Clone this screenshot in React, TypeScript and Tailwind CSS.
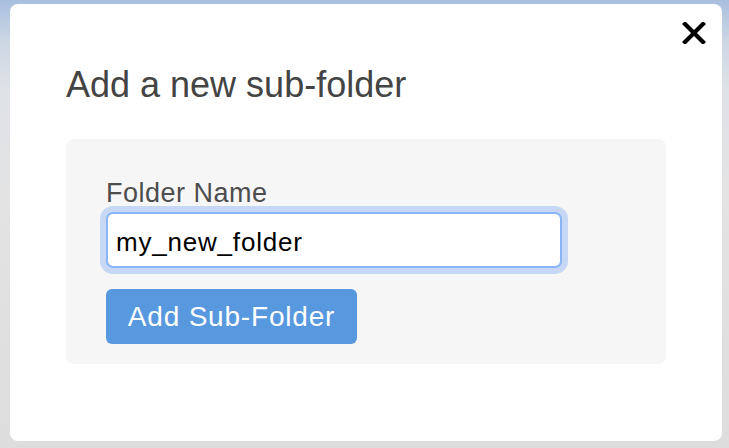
import React, { useState } from 'react';

const CloseIcon: React.FC = () => (
  <svg width="24" height="22" viewBox="0 0 24 22" fill="none">
    <path d="M3 2L21 20M21 2L3 20" stroke="#000" strokeWidth="4.2" strokeLinecap="square" />
  </svg>
);

const App: React.FC = () => {
  const [folderName, setFolderName] = useState('my_new_folder');

  return (
    <div
      className="w-[729px] h-[448px] pt-[4px] pl-[10px] pr-[7px] pb-[7px] flex bg-[linear-gradient(to_bottom,#a8bfdf_0%,#ccd6e4_9%,#dfe2e7_20%,#e3e3e3_45%,#dddddd_100%)]"
      style={{ fontFamily: '"Liberation Sans", Arial, sans-serif' }}
    >
      <div className="relative flex-1 bg-white rounded-[8px] pt-[60px] pl-[56px]">
        <button className="absolute top-[18px] right-[16px] w-[24px] h-[22px] flex items-center justify-center">
          <CloseIcon />
        </button>

        <h1 className="text-[36px] leading-[41px] text-[#444444] font-normal">Add a new sub-folder</h1>

        <div className="mt-[34px] w-[600px] bg-[#f6f6f6] rounded-[8px] pt-[39px] pl-[40px] pb-[20px]">
          <label className="block text-[27px] leading-[31px] tracking-[0.5px] text-[#4d4d4d]">Folder Name</label>
          <div className="mt-[3px] w-[456px] h-[56px] rounded-[7px] border-2 border-[#8ab5f6] bg-white shadow-[0_0_0_6px_#c6d8f6] flex items-center">
            <input
              value={folderName}
              onChange={(e) => setFolderName(e.target.value)}
              className="w-full pl-[8px] pt-[4px] text-[26px] tracking-[0.8px] text-black outline-none bg-transparent"
              style={{ fontFamily: '"Liberation Sans", Arial, sans-serif' }}
            />
          </div>
          <button className="mt-[21px] w-[251px] h-[55px] rounded-[6px] bg-[#5898de] text-white text-[28px] leading-[31px] tracking-[0.8px] flex items-center justify-center">
            Add Sub-Folder
          </button>
        </div>
      </div>
    </div>
  );
};

export default App;
